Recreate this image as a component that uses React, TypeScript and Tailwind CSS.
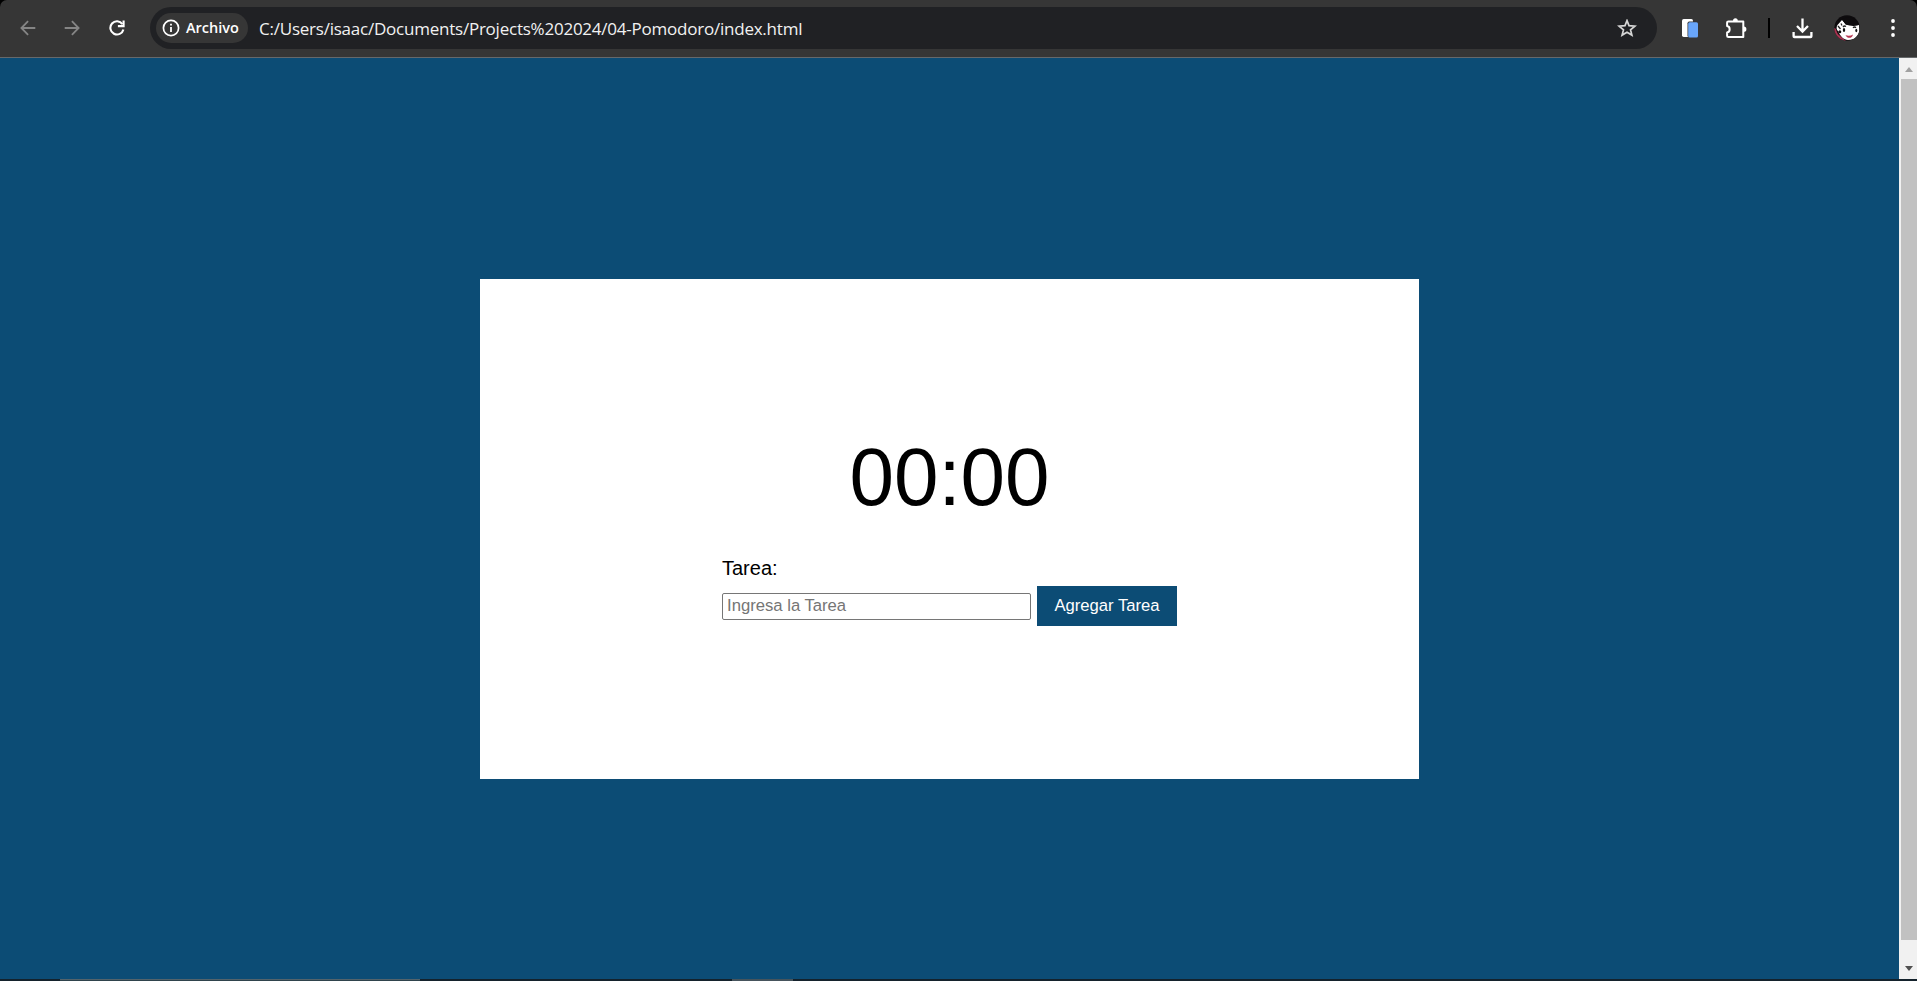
import type { ReactNode } from "react";

function BackIcon({ flipped = false }: { flipped?: boolean }) {
  return (
    <svg className={flipped ? "size-4 -scale-x-100" : "size-4"} viewBox="0 0 16 16" fill="none" stroke="#858585" strokeWidth="1.8">
      <path d="M15.3 8H2M8.1 1.2 1.4 8l6.7 6.8" />
    </svg>
  );
}

function ReloadIcon() {
  return (
    <svg className="size-4" viewBox="0 0 16 16" fill="none" stroke="#fff" strokeWidth="2.1">
      <path d="M13.4 4.1A6.6 6.6 0 1 0 14.4 9.4" />
      <path d="M14.6.4v5.7H8.9" />
    </svg>
  );
}

function InfoIcon() {
  return (
    <svg className="size-[18px] shrink-0" viewBox="0 0 18 18" fill="none" stroke="#fff">
      <circle cx="9" cy="9" r="7.6" strokeWidth="1.7" />
      <path d="M9 8v5M9 4.7v1.9" strokeWidth="1.8" />
    </svg>
  );
}

function StarIcon() {
  return (
    <svg className="h-[18px] w-5" viewBox="0 0 20 18" fill="none" stroke="#d6d6d6" strokeWidth="1.7">
      <path d="m10 1.6 2 5 5.9.5-4.4 3.7 1.4 5.3-4.9-2.9-4.9 2.9 1.4-5.3-4.4-3.7 5.9-.5Z" />
    </svg>
  );
}

function DocumentsIcon() {
  return (
    <svg className="h-[19px] w-4" viewBox="0 0 16 19">
      <rect width="11" height="18" rx="1.7" fill="#fff" />
      <rect x="5.5" y="2.5" width="10.5" height="16" rx="1.7" fill="#343536" />
      <rect x="6.2" y="3.2" width="9.8" height="15.3" rx="1.5" fill="#69a6fa" />
    </svg>
  );
}

function PuzzleIcon() {
  return (
    <svg className="size-[21px]" viewBox="0 0 21 21">
      <path
        d="M2.4 3.4h14.9v15.7H2.4q-1.3 0-1.3-1.3v-3.2c3.4-.4 3.4-6.1 0-6.5V4.6q0-1.2 1.3-1.2Z"
        fill="none"
        stroke="#fff"
        strokeWidth="2"
        strokeLinejoin="round"
      />
      <path d="M7 3a2.4 2.7 0 0 1 4.8 0ZM17.8 8.6a2.6 2.6 0 0 1 0 5.2Z" fill="#fff" />
    </svg>
  );
}

function DownloadIcon() {
  return (
    <svg className="h-[21px] w-[21px]" viewBox="0 0 21 21" fill="none" stroke="#fff" strokeWidth="2.3">
      <path d="M10.5.5v12.8M5 8l5.5 5.5L16 8M1.6 14v4.2q0 .8.8.8h16.2q.8 0 .8-.8V14" />
    </svg>
  );
}

function Avatar() {
  return (
    <svg className="size-[26px]" viewBox="0 0 26 26">
      <defs>
        <clipPath id="avatar">
          <circle cx="13" cy="13" r="12.7" />
        </clipPath>
      </defs>
      <g clipPath="url(#avatar)">
        <path fill="#0d0b0d" d="M0 0h26v26H0z" />
        <path fill="#a93350" d="M0 13c3 0 2 5 5 7l7 6H0Z" />
        <path fill="#fff" d="M3.5 10 8 5l4 4.5c5 1 8 .2 13 .5l.3 5C25 21 21 25 14 25c-4 0-8-4-10-9-1.5-1-2-4-.5-6Z" />
        <path fill="#0d0b0d" d="M8 4.5C13 1 22 2 25 10c-5 1.500-9 1-13.400-.5Z" />
        <path stroke="#222" strokeWidth="1.3" d="M9 12c1-1.4 2-1.2 3-.5M19 12.8c1-1 2-1 3 0M4 11l2.5 3M7 8.5l1 2" fill="none" />
        <ellipse cx="10" cy="15" rx="1.2" ry="1.9" fill="#111" />
        <ellipse cx="22.3" cy="15.5" rx="1" ry="1.8" fill="#111" />
        <circle cx="5.8" cy="16.8" r="1.5" fill="#111" />
        <path fill="#b93852" d="M11.5 20.2c3 .8 5.500.5 7.500-.8-.8 4.700-6 4-7.500.8Z" />
      </g>
    </svg>
  );
}

function MenuIcon() {
  return (
    <svg className="h-[18px] w-1" viewBox="0 0 4 18" fill="#fff">
      <circle cx="2" cy="2" r="1.9" />
      <circle cx="2" cy="9" r="1.9" />
      <circle cx="2" cy="16" r="1.9" />
    </svg>
  );
}

function ToolbarButton({ label, className, children }: { label: string; className: string; children: ReactNode }) {
  return (
    <button type="button" aria-label={label} className={`flex h-10 shrink-0 items-center justify-center ${className}`}>
      {children}
    </button>
  );
}

function Toolbar() {
  return (
    <header className="h-[58px] shrink-0 bg-black">
      <div className="flex h-[58px] items-center rounded-t-[7px] border-b border-[#66696b] bg-[#363636] pb-px pl-[5px]">
        <ToolbarButton label="Atrás" className="w-[45px]"><BackIcon /></ToolbarButton>
        <ToolbarButton label="Adelante" className="w-[44px]"><BackIcon flipped /></ToolbarButton>
        <ToolbarButton label="Recargar" className="w-[46px]"><ReloadIcon /></ToolbarButton>
        <div className="ml-[10px] flex h-[42px] w-[1507px] shrink-0 items-center rounded-full bg-[#202124] pl-[6px] pr-5">
          <div className="flex h-[30px] w-[92px] shrink-0 items-center rounded-full bg-[#363636] pl-[6px]">
            <InfoIcon />
            <span className="ml-[6px] pb-px font-['Open_Sans',sans-serif] text-[14.5px] font-semibold text-white">Archivo</span>
          </div>
          <span className="ml-[11px] grow whitespace-nowrap pt-0.5 font-['Open_Sans',sans-serif] text-[17px] tracking-[-0.23px] text-[#f1f1f1]">
            C:/Users/isaac/Documents/Projects%202024/04-Pomodoro/index.html
          </span>
          <StarIcon />
        </div>
        <ToolbarButton label="Documentos" className="ml-[10px] w-[46px]"><DocumentsIcon /></ToolbarButton>
        <ToolbarButton label="Extensiones" className="w-[46px]"><PuzzleIcon /></ToolbarButton>
        <span className="ml-[9px] h-5 w-0.5 shrink-0 bg-black" />
        <ToolbarButton label="Descargas" className="ml-[11px] w-[43px]"><DownloadIcon /></ToolbarButton>
        <ToolbarButton label="Perfil" className="w-[46px]"><Avatar /></ToolbarButton>
        <ToolbarButton label="Menú" className="ml-[3px] w-[40px]"><MenuIcon /></ToolbarButton>
      </div>
    </header>
  );
}

function Scrollbar() {
  return (
    <div className="flex w-[18px] shrink-0 flex-col bg-[#f1f1f1] pl-0.5">
      <div className="flex h-[21px] items-center justify-center pt-0.5">
        <svg className="h-[5px] w-2" viewBox="0 0 8 5" fill="#a1a1a1"><path d="M0 5 4 0l4 5Z" /></svg>
      </div>
      <div className="h-[861px] bg-[#c1c1c1]" />
      <div className="flex grow items-center justify-center pt-[18px]">
        <svg className="h-[5px] w-2" viewBox="0 0 8 5" fill="#505050"><path d="m0 0 4 5 4-5Z" /></svg>
      </div>
    </div>
  );
}

function Pomodoro() {
  return (
    <section className="flex h-[500px] w-[939px] flex-col items-center bg-white pt-[152px] font-['Liberation_Sans',Arial,sans-serif]">
      <div className="scale-y-[1.03] text-[80px] leading-[92px] text-black">00:00</div>
      <form className="mt-[34px] w-[455px]" onSubmit={(event) => event.preventDefault()}>
        <label htmlFor="task" className="block text-xl leading-[23px] text-black">Tarea:</label>
        <div className="mt-[6px] flex items-start">
          <input
            id="task"
            type="text"
            placeholder="Ingresa la Tarea"
            className="mt-[7px] h-[27px] w-[309px] rounded-[2px] border border-[#767676] bg-white px-1 pb-0.5 text-[16.67px] leading-[19px] placeholder:text-[#757575]"
          />
          <button type="submit" className="ml-[6px] h-10 w-[140px] bg-[#0c4c75] pb-0.5 text-[16.67px] text-white">Agregar Tarea</button>
        </div>
      </form>
    </section>
  );
}

export default function App() {
  return (
    <div className="flex h-[981px] w-[1917px] flex-col overflow-hidden bg-[#0c4c75]">
      <Toolbar />
      <div className="flex h-[921px] shrink-0">
        <main className="flex grow justify-center pt-[221px]">
          <Pomodoro />
        </main>
        <Scrollbar />
      </div>
      <footer className="flex h-0.5 shrink-0 bg-[#14222c]">
        <div className="ml-[60px] w-[360px] border-t border-[#53636b] bg-[#2f434c]" />
        <div className="ml-[312px] w-[61px] bg-[#46545c]" />
      </footer>
    </div>
  );
}
